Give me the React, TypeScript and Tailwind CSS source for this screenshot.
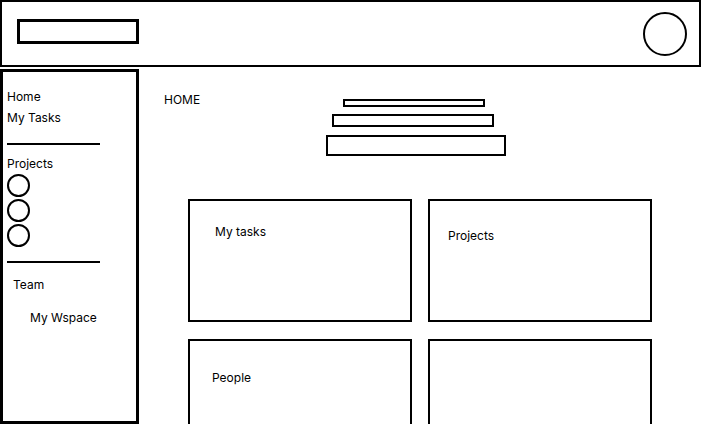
import React from 'react';

const font = { fontFamily: 'Inter, "Noto Sans", sans-serif' };

const Circle = () => <div className="w-[23px] h-[23px] rounded-full border-2 border-black" />;

const Card = ({ label, pad }: { label?: string; pad: string }) => (
  <div className={`w-[224px] h-[123px] border-2 border-black ${pad}`}>
    {label && <p className="text-[12px] leading-[15px] text-black">{label}</p>}
  </div>
);

const App = () => {
  return (
    <div className="w-[703px] h-[424px] overflow-hidden bg-white text-black" style={font}>
      <header className="w-[701px] h-[67px] border-2 border-black flex justify-between items-start pl-[15px] pr-[12px]">
        <div className="mt-[17px] w-[122px] h-[25px] border-[3px] border-black" />
        <div className="mt-[10px] w-[44px] h-[44px] rounded-full border-2 border-black" />
      </header>

      <div className="flex mt-[2px]">
        <aside className="w-[139px] h-[356px] border-[3px] border-b-4 border-black pl-[4px] pt-[17px] text-[12px] leading-[15px]">
          <p>Home</p>
          <p className="mt-[6px]">My Tasks</p>
          <div className="mt-[18px] w-[93px] h-[2px] bg-black" />
          <p className="mt-[11px]">Projects</p>
          <div className="mt-[3px] flex flex-col gap-[2px]">
            <Circle />
            <Circle />
            <Circle />
          </div>
          <div className="mt-[14px] w-[93px] h-[2px] bg-black" />
          <p className="mt-[14px] ml-[6px]">Team</p>
          <p className="mt-[18px] ml-[23px]">My Wspace</p>
        </aside>

        <main className="flex-1">
          <div className="flex">
            <p className="ml-[25px] mt-[23px] text-[12px] leading-[15px] w-[162px]">HOME</p>
            <div className="mt-[30px] flex flex-col items-start">
              <div className="ml-[17px] w-[142px] h-[8px] border-2 border-black" />
              <div className="ml-[6px] mt-[7px] w-[162px] h-[13px] border-2 border-black" />
              <div className="mt-[8px] w-[180px] h-[21px] border-2 border-black" />
            </div>
          </div>

          <div className="ml-[49px] mt-[43px] grid grid-cols-[224px_224px] gap-x-[16px] gap-y-[17px]">
            <Card label="My tasks" pad="pl-[25px] pt-[23px]" />
            <Card label="Projects" pad="pl-[18px] pt-[27px]" />
            <Card label="People" pad="pl-[22px] pt-[29px]" />
            <Card pad="" />
          </div>
        </main>
      </div>
    </div>
  );
};

export default App;
